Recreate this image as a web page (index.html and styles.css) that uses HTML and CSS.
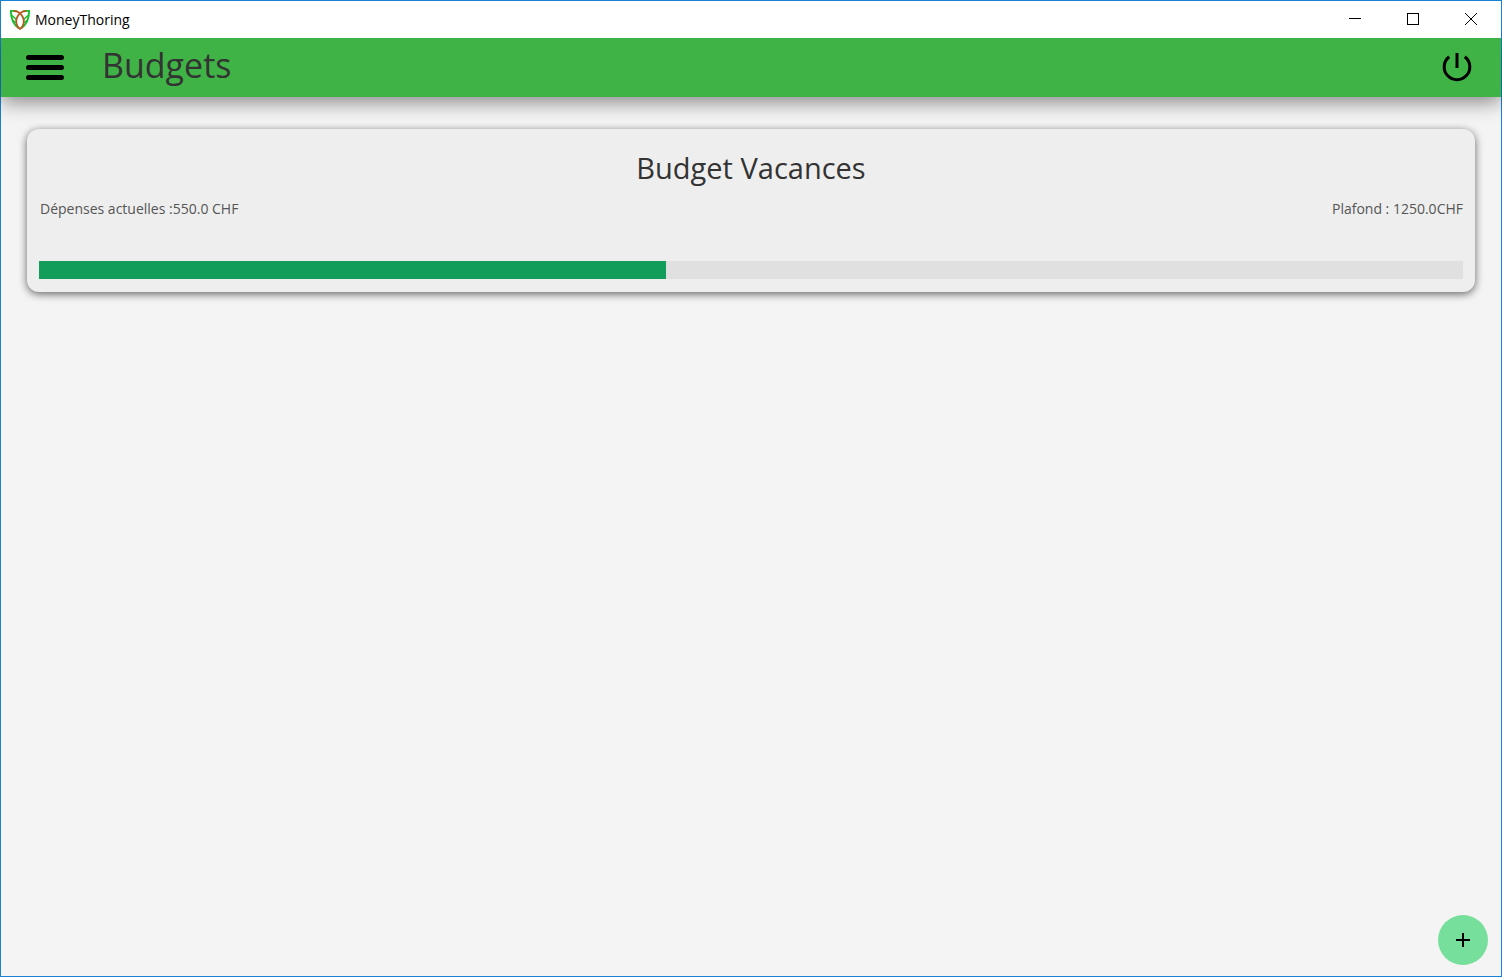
FILE: index.html
```
<!DOCTYPE html>
<html lang="fr">
<head>
<meta charset="utf-8">
<title>MoneyThoring</title>
<link rel="stylesheet" href="styles.css">
</head>
<body>
<div class="window">
  <div class="titlebar">
    <svg class="logo" viewBox="0 0 20 20" fill="none" aria-hidden="true">
      <path d="M7 1.500C5 .7 3 .8.9.9C.8 7 2.500 13.500 8.500 18M13 1.500C15 .7 17 .8 19.100.9C19.200 7 17.500 13.500 11.500 18" stroke="#16bd2c" stroke-width="1.800"/>
      <path d="M1.500 5L6.500 9.500M2.500 10L6.500 13M18.500 5L13.500 9.500M17.500 10L13.500 13" stroke="#16bd2c" stroke-width="1.500"/>
      <path d="M3.500 1.200C8 .8 10.500 3 12.500 6.500C15 11 13.500 17 10 19C6.500 17 5 11 7.500 6.500C9.500 3 12 .8 16.500 1.200" stroke="#b55a22" stroke-width="1.800"/>
    </svg>
    <span class="app-name">MoneyThoring</span>
    <div class="window-controls">
      <button class="window-button" type="button" aria-label="Réduire"><svg viewBox="0 0 12 12" shape-rendering="crispEdges"><path d="M0 5.500H12"/></svg></button>
      <button class="window-button" type="button" aria-label="Agrandir"><svg viewBox="0 0 12 12" shape-rendering="crispEdges"><path d="M.5.5H11.500V11.500H.5Z"/></svg></button>
      <button class="window-button" type="button" aria-label="Fermer"><svg viewBox="0 0 12 12"><path d="M0 0L12 12M12 0L0 12"/></svg></button>
    </div>
  </div>
  <header class="header">
    <button class="icon-button" type="button" aria-label="Menu">
      <svg class="menu-icon" viewBox="0 0 38 26"><path d="M2.500 2.500H35.500M2.500 12.500H35.500M2.500 22.500H35.500" stroke="#000" stroke-width="5" stroke-linecap="round"/></svg>
    </button>
    <h1 class="page-title">Budgets</h1>
    <button class="icon-button power" type="button" aria-label="Déconnexion">
      <svg class="power-icon" viewBox="0 0 30 30" fill="none" stroke="#000" stroke-width="3"><path d="M15 0V15M7.200 3.800A12.800 12.800 0 1 0 22.800 3.800"/></svg>
    </button>
  </header>
  <main class="content">
    <article class="card">
      <h2 class="card-title">Budget Vacances</h2>
      <div class="amounts">
        <span>Dépenses actuelles :550.0 CHF</span>
        <span>Plafond : 1250.0CHF</span>
      </div>
      <div class="progress" role="progressbar" aria-label="Budget Vacances" aria-valuemin="0" aria-valuemax="1250" aria-valuenow="550">
        <div class="progress-value" style="width: 44%"></div>
      </div>
    </article>
    <button class="add-button" type="button" aria-label="Ajouter un budget">
      <svg viewBox="0 0 14 14" shape-rendering="crispEdges"><path d="M7 0V14M0 7H14" stroke="#000" stroke-width="2"/></svg>
    </button>
  </main>
</div>
</body>
</html>
```
FILE: styles.css
```
* { box-sizing: border-box; }

body {
  margin: 0;
  font-family: "Open Sans", "Noto Sans", sans-serif;
  color: #333;
}

button {
  display: flex;
  align-items: center;
  justify-content: center;
  padding: 0;
  border: 0;
  background: none;
  cursor: pointer;
}

svg { display: block; }

.window {
  display: flex;
  flex-direction: column;
  min-height: 100vh;
  border: 1px solid #1a80d4;
  background: #f4f4f4;
}

/* Sits above the header so the header's shadow only falls downwards. */
.titlebar {
  position: relative;
  z-index: 1;
  display: flex;
  align-items: center;
  height: 37px;
  padding-left: 9px;
  gap: 5px;
  background: #fff;
}

.logo { width: 20px; height: 20px; }

.app-name {
  font-size: 14px;
  line-height: 20px;
  color: #000;
}

.window-controls {
  display: flex;
  align-self: flex-start;
  margin-left: auto;
  padding-right: 1px;
}

.window-button {
  width: 58px;
  height: 36px;
}

.window-button svg {
  width: 12px;
  height: 12px;
  fill: none;
  stroke: #000;
}

.header {
  display: flex;
  align-items: center;
  height: 59px;
  padding: 0 29px 0 25px;
  background: #40b346;
  box-shadow: 0 5px 20px rgba(0, 0, 0, 0.45);
}

.menu-icon { width: 38px; height: 26px; }

.page-title {
  margin: 0 0 5px 38px;
  font-size: 34px;
  font-weight: 400;
  line-height: 48px;
}

.power { margin-left: auto; }

.power-icon { width: 30px; height: 30px; }

.content {
  display: flex;
  flex: 1;
  flex-direction: column;
  justify-content: space-between;
  padding: 32px 13px 11px 26px;
}

.card {
  margin-right: 13px;
  padding: 19px 12px 13px;
  border-radius: 12px;
  background: #eee;
  box-shadow: 0 2px 8px rgba(0, 0, 0, 0.6);
}

.card-title {
  margin: 0;
  font-size: 29px;
  font-weight: 400;
  line-height: 40px;
  text-align: center;
}

.amounts {
  display: flex;
  justify-content: space-between;
  margin: 11px 0 42px;
  padding-left: 1px;
  font-size: 14px;
  line-height: 20px;
  color: #555;
}

.progress {
  height: 18px;
  background: #e0e0e0;
}

.progress-value {
  height: 100%;
  background: #129e5a;
}

.add-button {
  align-self: flex-end;
  width: 50px;
  height: 50px;
  border-radius: 50%;
  background: #76df9b;
}

.add-button svg { width: 14px; height: 14px; }
```
